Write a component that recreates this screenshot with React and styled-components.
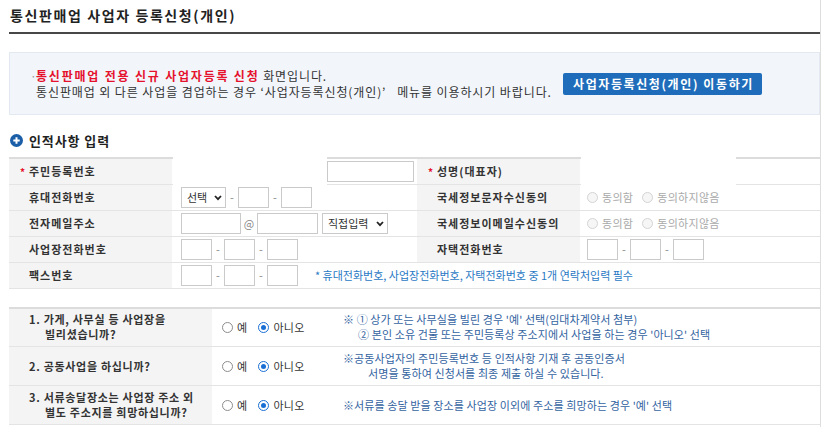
import React from "react";
import styled, { createGlobalStyle } from "styled-components";

const Global = createGlobalStyle`
  html, body { margin: 0; padding: 0; background: #fff; }
  body {
    font-family: "Noto Sans CJK KR", "Noto Sans", sans-serif;
    font-size: 12px;
    color: #333;
  }
  * { box-sizing: border-box; }
`;

const Page = styled.div`
  width: 821px;
  min-height: 427px;
  padding-left: 9px;
  border-right: 1px solid #dedede;
`;

const Title = styled.h1`
  margin: 0;
  padding: 5px 0 7px 1px;
  font-size: 14px;
  line-height: 20px;
  font-weight: 700;
  letter-spacing: 1.6px;
  color: #222;
  border-bottom: 2px solid #474747;
`;

const InfoBox = styled.div`
  margin-top: 18px;
  height: 63px;
  display: flex;
  align-items: center;
  padding-left: 20px;
  background: #f2f6fb;
  border: 1px solid #e3e9f0;
`;

const InfoText = styled.div`
  width: 533px;
  line-height: 16px;
  font-size: 12px;
  letter-spacing: 0.9px;
  color: #333;
`;

const Bullet = styled.span`
  display: inline-block;
  width: 6px;
  color: #999;
  letter-spacing: 0;
`;

const Indent = styled.span`
  display: inline-block;
  width: 6px;
`;

const Highlight = styled.strong`
  color: #e5112d;
  font-weight: 700;
  letter-spacing: 1.8px;
`;

const MoveButton = styled.button`
  height: 22px;
  padding: 0 8px 0 10px;
  border: none;
  border-radius: 2px;
  background: #1f6dba;
  color: #fff;
  font-family: inherit;
  font-size: 12px;
  font-weight: 700;
  letter-spacing: 1.6px;
  line-height: 22px;
`;

const SectionHeader = styled.h2`
  margin: 15px 0 7px;
  height: 20px;
  padding-left: 1px;
  display: flex;
  align-items: center;
  gap: 6px;
  font-size: 13px;
  font-weight: 700;
  letter-spacing: 0.9px;
  color: #222;
`;

const TableWrap = styled.div`
  position: relative;
`;

const Mask = styled.div`
  position: absolute;
  top: -2px;
  height: 30px;
  background: #fff;
`;

const Table = styled.table`
  width: 100%;
  border-collapse: collapse;
  table-layout: fixed;
  border-top: 2px solid #dcdcdc;
`;

const Th = styled.th`
  height: 26px;
  padding: 0 0 0 20px;
  background: #f4f4f4;
  text-align: left;
  font-size: 11px;
  font-weight: 700;
  letter-spacing: 1px;
  color: #333;
  border-bottom: 1px solid #e4e4e4;
  vertical-align: middle;
`;

const Td = styled.td`
  height: 26px;
  padding: 0 0 0 ${(p) => p.$pad ?? 9}px;
  border-bottom: 1px solid #e4e4e4;
  vertical-align: middle;
`;

const Star = styled.span`
  display: inline-block;
  width: 9px;
  margin-left: -9px;
  color: #e5112d;
  font-size: 10px;
  letter-spacing: 0;
`;

const Field = styled.div`
  display: flex;
  align-items: center;
`;

const Input = styled.input`
  width: ${(p) => p.$w}px;
  height: 21px;
  padding: 0 3px;
  border: 1px solid #cacaca;
  background: #fff;
  font-family: inherit;
  font-size: 11px;
`;

const Sep = styled.span`
  width: ${(p) => p.$w || 12}px;
  text-align: center;
  color: #888;
  font-size: 11px;
`;

const SelectBox = styled.span`
  position: relative;
  display: inline-flex;
  margin-left: ${(p) => p.$ml || 0}px;
`;

const Select = styled.select`
  appearance: none;
  width: ${(p) => p.$w}px;
  height: 21px;
  padding: 0 0 0 5px;
  border: 1px solid #cacaca;
  background: #fff;
  font-family: inherit;
  font-size: 11px;
  color: #333;
`;

const Chevron = styled.svg`
  position: absolute;
  right: 4px;
  top: 8px;
  pointer-events: none;
`;

const RadioGroup = styled.div`
  display: flex;
  align-items: center;
  gap: ${(p) => p.$gap || 9}px;
`;

const RadioLabel = styled.label`
  display: inline-flex;
  align-items: center;
  gap: 4px;
  font-size: 11px;
  letter-spacing: 0.3px;
  color: ${(p) => (p.$disabled ? "#a9a9a9" : "#333")};
`;

const Dot = styled.span`
  position: relative;
  width: 11px;
  height: 11px;
  border-radius: 50%;
  border: 1px solid
    ${(p) => (p.$disabled ? "#d4d4d4" : p.$on ? "#1a6fd4" : "#8c8c8c")};
  background: ${(p) => (p.$disabled ? "#f6f6f6" : "#fff")};
  &::after {
    content: "";
    display: ${(p) => (p.$on ? "block" : "none")};
    position: absolute;
    left: 2px;
    top: 2px;
    width: 5px;
    height: 5px;
    border-radius: 50%;
    background: #1a6fd4;
  }
`;

const Note = styled.span`
  color: #2a79c4;
  font-size: 11px;
  letter-spacing: 0;
  margin-left: 17px;
`;

const QTable = styled(Table)`
  margin-top: 18px;
`;

const QTh = styled(Th)`
  height: 39px;
  padding-left: 36px;
  text-indent: -16px;
  line-height: 15px;
  letter-spacing: 0.7px;
`;

const QTd = styled(Td)`
  height: 39px;
`;

const Explain = styled.div`
  color: #33639f;
  font-size: 11px;
  letter-spacing: 0.1px;
  line-height: 15px;
`;

const ExplainLine = styled.div`
  padding-left: ${(p) => p.$indent || 0}px;
`;

function Radio({ label, on, disabled }) {
  return (
    <RadioLabel $disabled={disabled}>
      <Dot $on={on} $disabled={disabled} />
      {label}
    </RadioLabel>
  );
}

function Dropdown({ w, ml, children }) {
  return (
    <SelectBox $ml={ml}>
      <Select $w={w} defaultValue="">
        <option value="">{children}</option>
      </Select>
      <Chevron width="8" height="6" viewBox="0 0 8 6">
        <path d="M1 1 L4 4.2 L7 1" fill="none" stroke="#222" strokeWidth="1.8" />
      </Chevron>
    </SelectBox>
  );
}

function Phone() {
  return (
    <Field>
      <Input $w={31} />
      <Sep>-</Sep>
      <Input $w={31} />
      <Sep>-</Sep>
      <Input $w={31} />
    </Field>
  );
}

function PlusIcon() {
  return (
    <svg width="13" height="13" viewBox="0 0 13 13">
      <circle cx="6.5" cy="6.5" r="6.5" fill="#1b5ea8" />
      <path d="M6.5 3.3 V9.7 M3.3 6.5 H9.7" stroke="#fff" strokeWidth="2" />
    </svg>
  );
}

const yesNo = (
  <RadioGroup $gap={11}>
    <Radio label="예" />
    <Radio label="아니오" on />
  </RadioGroup>
);

const agree = (
  <RadioGroup $gap={9}>
    <Radio label="동의함" disabled />
    <Radio label="동의하지않음" disabled />
  </RadioGroup>
);

export default function App() {
  return (
    <>
      <Global />
      <Page>
        <Title>통신판매업 사업자 등록신청(개인)</Title>

        <InfoBox>
          <InfoText>
            <div>
              <Bullet>·</Bullet>
              <Highlight>통신판매업 전용 신규 사업자등록 신청</Highlight> 화면입니다.
            </div>
            <div>
              <Indent />
              통신판매업 외 다른 사업을 겸업하는 경우 ‘사업자등록신청(개인)’{"\u00a0\u00a0\u00a0"}메뉴를 이용하시기 바랍니다.
            </div>
          </InfoText>
          <MoveButton>사업자등록신청(개인) 이동하기</MoveButton>
        </InfoBox>

        <SectionHeader>
          <PlusIcon />
          인적사항 입력
        </SectionHeader>

        <TableWrap>
          <Table>
            <colgroup>
              <col style={{ width: 163 }} />
              <col style={{ width: 245 }} />
              <col style={{ width: 163 }} />
              <col />
            </colgroup>
            <tbody>
              <tr>
                <Th>
                  <Star>*</Star>주민등록번호
                </Th>
                <Td>
                  <Field>
                    <Input $w={134} />
                    <Sep>-</Sep>
                    <Input $w={87} />
                  </Field>
                </Td>
                <Th>
                  <Star>*</Star>성명(대표자)
                </Th>
                <Td>
                  <Input $w={140} />
                </Td>
              </tr>
              <tr>
                <Th>휴대전화번호</Th>
                <Td>
                  <Field>
                    <Dropdown w={45}>선택</Dropdown>
                    <Sep>-</Sep>
                    <Input $w={31} />
                    <Sep>-</Sep>
                    <Input $w={31} />
                  </Field>
                </Td>
                <Th>국세정보문자수신동의</Th>
                <Td $pad={7}>{agree}</Td>
              </tr>
              <tr>
                <Th>전자메일주소</Th>
                <Td>
                  <Field>
                    <Input $w={60} />
                    <Sep $w={16}>@</Sep>
                    <Input $w={61} />
                    <Dropdown w={66} ml={4}>직접입력</Dropdown>
                  </Field>
                </Td>
                <Th>국세정보이메일수신동의</Th>
                <Td $pad={7}>{agree}</Td>
              </tr>
              <tr>
                <Th>사업장전화번호</Th>
                <Td>
                  <Phone />
                </Td>
                <Th>자택전화번호</Th>
                <Td $pad={7}>
                  <Phone />
                </Td>
              </tr>
              <tr>
                <Th>팩스번호</Th>
                <Td colSpan={3}>
                  <Field>
                    <Input $w={31} />
                    <Sep>-</Sep>
                    <Input $w={31} />
                    <Sep>-</Sep>
                    <Input $w={31} />
                    <Note>* 휴대전화번호, 사업장전화번호, 자택전화번호 중 1개 연락처입력 필수</Note>
                  </Field>
                </Td>
              </tr>
            </tbody>
          </Table>
          <Mask style={{ left: 164, width: 154 }} />
          <Mask style={{ left: 572, width: 155 }} />
        </TableWrap>

        <QTable>
          <colgroup>
            <col style={{ width: 203 }} />
            <col style={{ width: 121 }} />
            <col />
          </colgroup>
          <tbody>
            <tr>
              <QTh>
                1. 가게, 사무실 등 사업장을
                <br />
                빌리셨습니까?
              </QTh>
              <QTd $pad={10}>{yesNo}</QTd>
              <QTd $pad={10}>
                <Explain>
                  <ExplainLine>※ ① 상가 또는 사무실을 빌린 경우 '예' 선택(임대차계약서 첨부)</ExplainLine>
                  <ExplainLine $indent={15}>② 본인 소유 건물 또는 주민등록상 주소지에서 사업을 하는 경우 '아니오' 선택</ExplainLine>
                </Explain>
              </QTd>
            </tr>
            <tr>
              <QTh>2. 공동사업을 하십니까?</QTh>
              <QTd $pad={10}>{yesNo}</QTd>
              <QTd $pad={10}>
                <Explain>
                  <ExplainLine>※공동사업자의 주민등록번호 등 인적사항 기재 후 공동인증서</ExplainLine>
                  <ExplainLine $indent={25}>서명을 통하여 신청서를 최종 제출 하실 수 있습니다.</ExplainLine>
                </Explain>
              </QTd>
            </tr>
            <tr>
              <QTh>
                3. 서류송달장소는 사업장 주소 외
                <br />
                별도 주소지를 희망하십니까?
              </QTh>
              <QTd $pad={10}>{yesNo}</QTd>
              <QTd $pad={10}>
                <Explain>
                  <ExplainLine>※서류를 송달 받을 장소를 사업장 이외에 주소를 희망하는 경우 '예' 선택</ExplainLine>
                </Explain>
              </QTd>
            </tr>
          </tbody>
        </QTable>
      </Page>
    </>
  );
}
